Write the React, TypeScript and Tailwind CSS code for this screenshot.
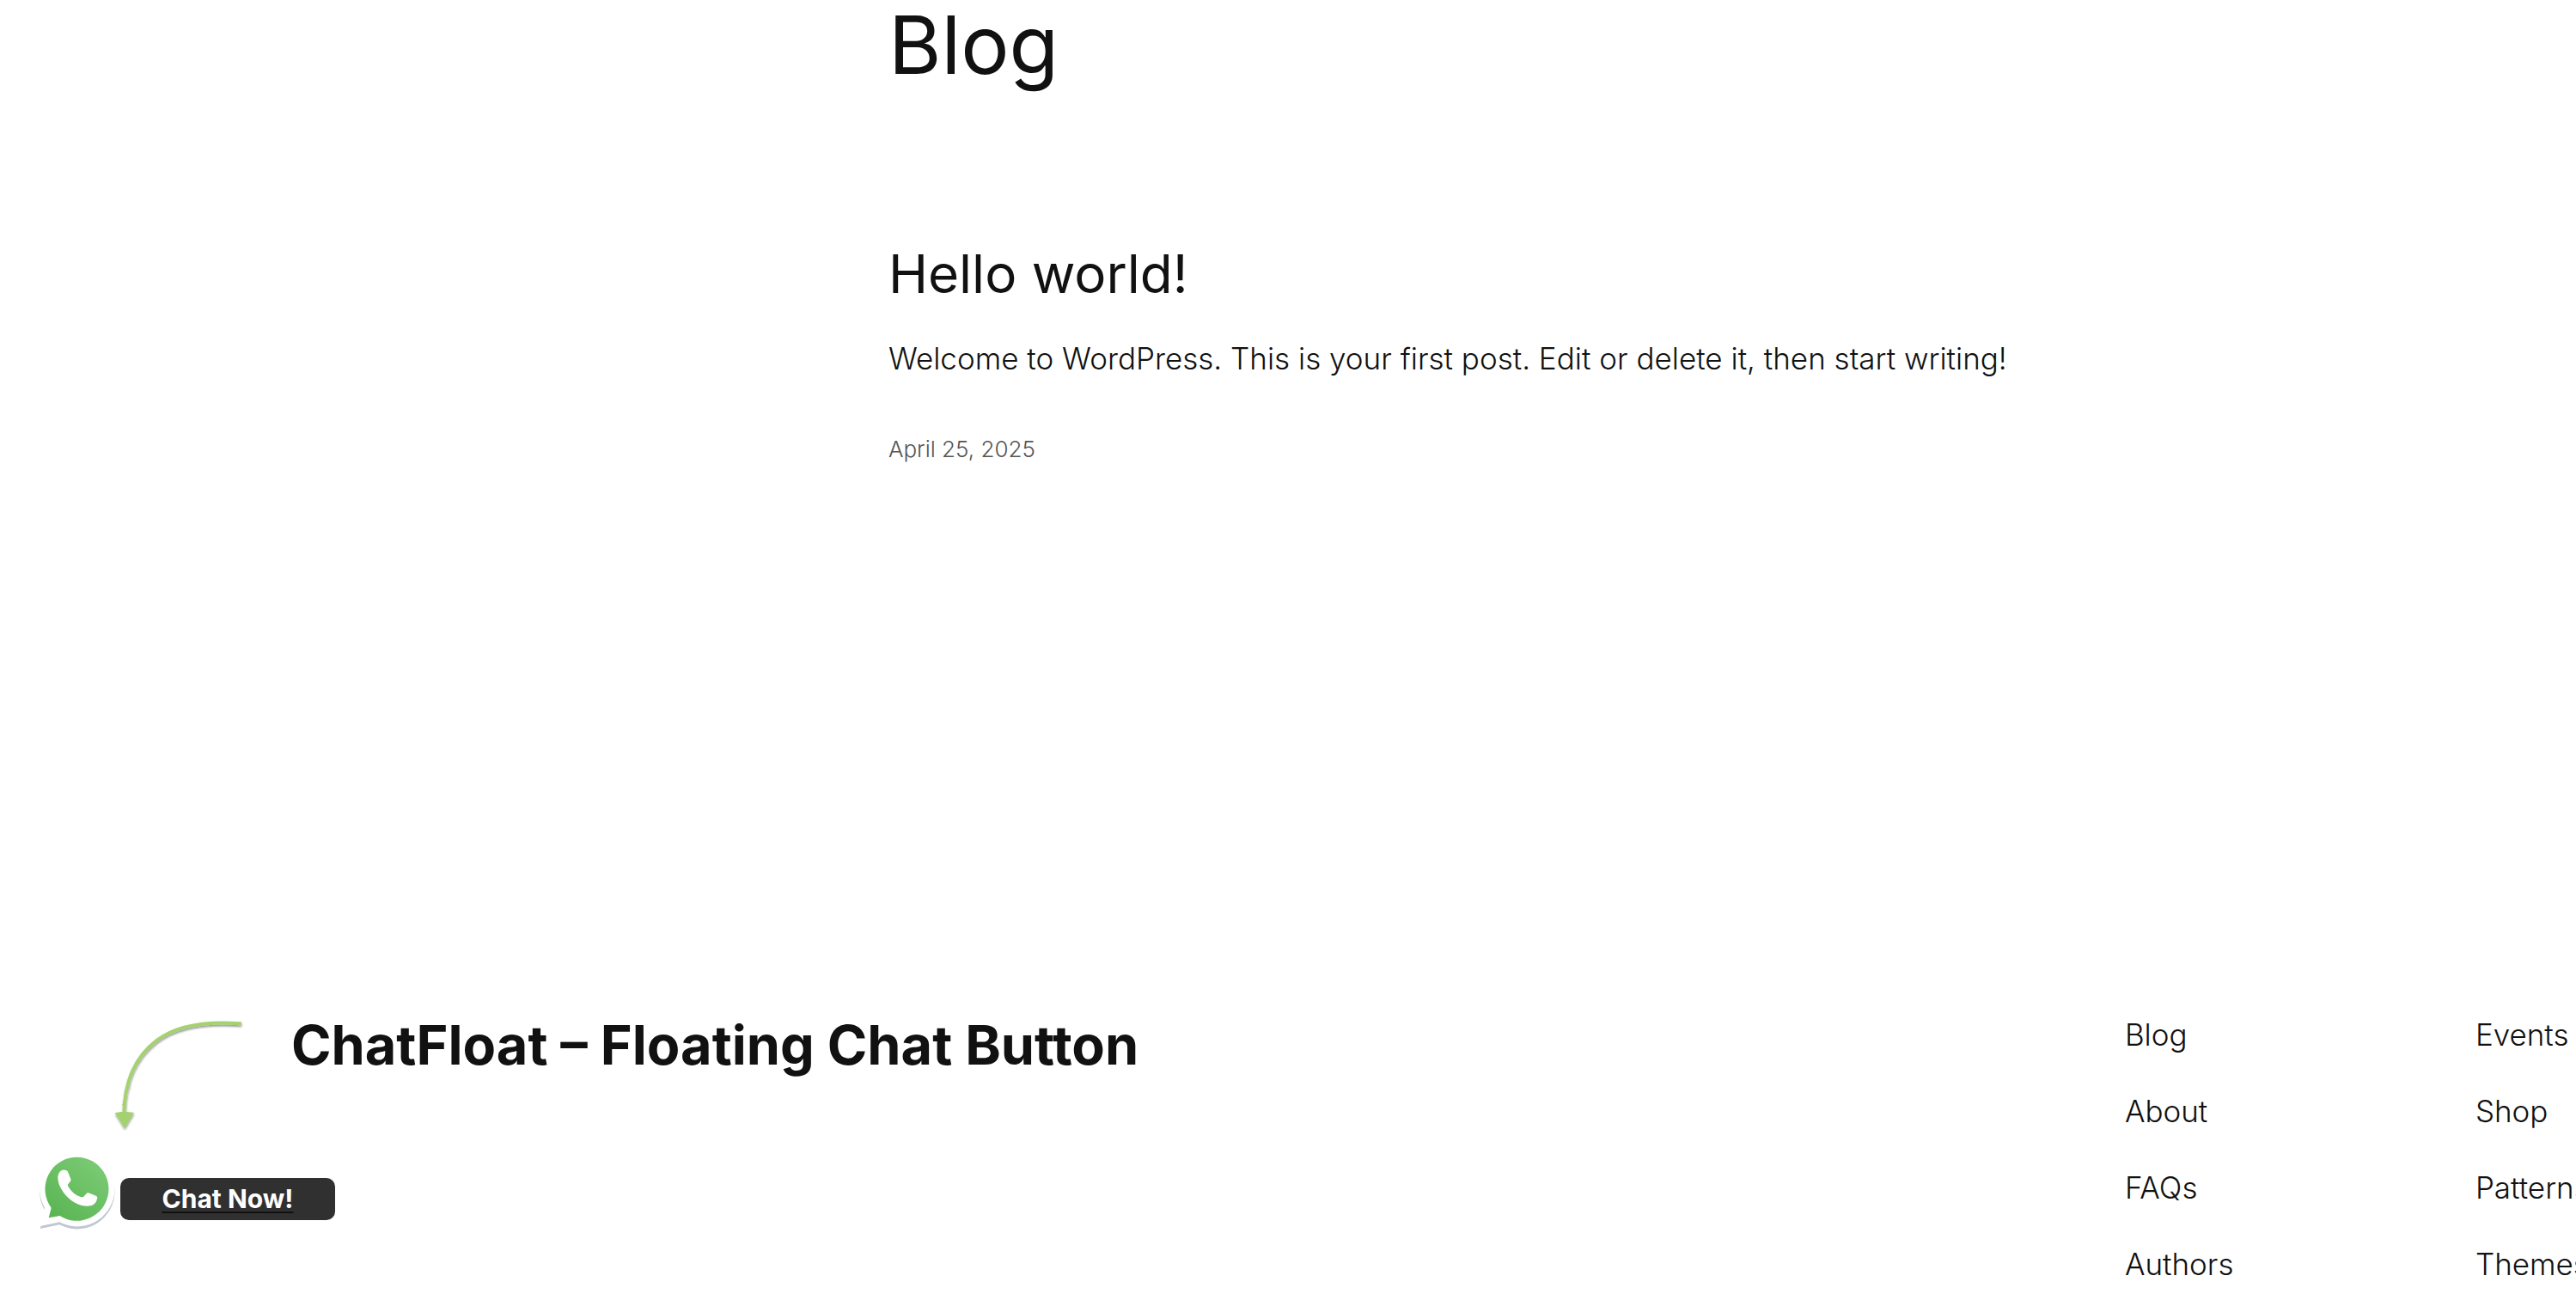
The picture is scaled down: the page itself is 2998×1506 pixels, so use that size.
const navColumns = [
  { label: 'Site pages', width: 'w-[408px]', links: ['Blog', 'About', 'FAQs', 'Authors'] },
  { label: 'More pages', width: 'w-[138px]', links: ['Events', 'Shop', 'Patterns', 'Themes'] },
];

function CurvedArrow() {
  return (
    <svg className="ml-[86px] h-[132px] w-[152px]" viewBox="396 78 456 396" fill="none" aria-hidden="true">
      <defs>
        <filter id="arrowShadow" x="-20%" y="-20%" width="140%" height="140%">
          <feDropShadow dx="1" dy="6" stdDeviation="3" floodColor="#000" floodOpacity="0.4" />
        </filter>
        <filter id="chalk">
          <feTurbulence type="fractalNoise" baseFrequency="0.15" numOctaves="2" result="noise" />
          <feDisplacementMap in="SourceGraphic" in2="noise" scale="5" />
        </filter>
      </defs>
      <g filter="url(#arrowShadow)">
        <g filter="url(#chalk)">
          <path d="M846 94C720 84 618 101 551 152C470 213 437 300 436 412" stroke="#a5d26f" strokeWidth="12" />
          <path d="M404 406C425 400 450 402 471 405L438 460Z" fill="#a5d26f" />
        </g>
      </g>
    </svg>
  );
}

function WhatsAppIcon() {
  const outline =
    'M66 227A131 131 0 1 1 118 277L50 291Z';
  return (
    <svg className="h-[88px] w-[90px]" viewBox="45 45 270 264" aria-hidden="true">
      <defs>
        <linearGradient id="bubble" x1="0.85" y1="0.1" x2="0.15" y2="0.95">
          <stop offset="0" stopColor="#7aca74" />
          <stop offset="1" stopColor="#5bb553" />
        </linearGradient>
      </defs>
      <path d={outline} transform="translate(0 9)" fill="#bfc8d0" />
      <path d={outline} fill="#fff" />
      <path d="M89 227A111 111 0 1 1 119 255L80 262Z" fill="url(#bubble)" />
      <path
        d="M136 95C125 93 113 104 112 120C111 146 130 177 155 198C177 216 203 224 225 220C242 217 248 204 250 191C250 188 248 187 245 185L219 175C216 174 214 175 212 177L202 188C199 191 195 190 190 188C169 181 154 164 147 149C146 147 147 145 149 143L157 133C158 131 158 129 157 127L147 101C145 97 141 95 136 95Z"
        fill="#fff"
      />
    </svg>
  );
}

function ChatWidget() {
  return (
    <div className="fixed bottom-[73px] left-[45px] flex flex-col gap-[27px]">
      <CurvedArrow />
      <a href="#chat" className="flex items-end gap-[5px]">
        <WhatsAppIcon />
        <span className="mb-[13px] flex h-[49px] w-[250px] items-center justify-center rounded-[10px] bg-[#303030] text-[30px] font-bold text-white underline decoration-[#111111] decoration-2 underline-offset-4">
          Chat Now!
        </span>
      </a>
    </div>
  );
}

export default function App() {
  return (
    <div className="overflow-x-clip bg-white font-['Inter',sans-serif] text-[#111111]">
      <div className="w-[112%]">
        <main className="mx-auto max-w-[1290px]">
          <h1 className="text-[94px] leading-[104px]">Blog</h1>
          <article className="pt-[175px]">
            <h2 className="text-[62px] leading-[80px]">
              <a href="#hello-world">Hello world!</a>
            </h2>
            <p className="pt-8 text-[35px] leading-[52px] font-light whitespace-nowrap">
              Welcome to WordPress. This is your first post. Edit or delete it, then start writing!
            </p>
            <p className="pt-[60px] text-[26px] leading-[40px] font-light text-[#555555]">
              <a href="#hello-world">
                <time dateTime="2025-04-25">April 25, 2025</time>
              </a>
            </p>
          </article>
        </main>
        <footer className="mx-auto flex max-w-[2680px] items-start justify-between pt-[635px]">
          <p className="text-[63px] leading-[76px] font-bold">
            <a href="#home">ChatFloat – Floating Chat Button</a>
          </p>
          <div className="flex">
            {navColumns.map((column) => (
              <nav key={column.label} aria-label={column.label} className={column.width}>
                <ul className="flex flex-col gap-[37px]">
                  {column.links.map((link) => (
                    <li key={link} className="text-[35px] leading-[52px] font-light">
                      <a href={`#${link.toLowerCase()}`}>{link}</a>
                    </li>
                  ))}
                </ul>
              </nav>
            ))}
          </div>
        </footer>
      </div>
      <ChatWidget />
    </div>
  );
}
